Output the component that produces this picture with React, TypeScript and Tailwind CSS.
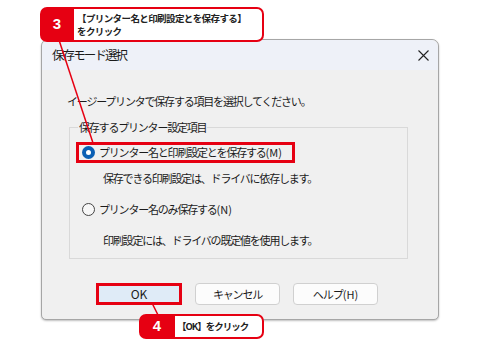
import React from "react";

const jp = { fontFamily: '"Noto Sans CJK JP", "Noto Sans", sans-serif' };

export default function App() {
  return (
    <div
      className="relative w-[480px] h-[360px] bg-white overflow-hidden text-[#1b1b1b]"
      style={jp}
    >
      {/* Dialog */}
      <div className="absolute left-[41px] top-[39px] w-[398px] h-[281px] border border-[#a6a6a6] rounded-t-[7px] rounded-b-[5px] bg-[#f0f0f0] flex flex-col shadow-[0_1px_2px_rgba(0,0,0,0.25)]">
        <div className="h-[30px] flex items-center justify-between pl-[10px] pr-[9px] bg-[#eef1f8] rounded-t-[7px]">
          <span className="text-[12.5px] leading-none tracking-[-1.9px]">保存モード選択</span>
          <svg width="11" height="11" viewBox="0 0 11 11">
            <path d="M0.5 0.5 L10.5 10.5 M10.5 0.5 L0.5 10.5" stroke="#222" strokeWidth="1.1" />
          </svg>
        </div>
        <div className="flex-1 flex flex-col pl-[25px] pt-[23px] text-[11px] tracking-[-1.2px]">
          <div className="leading-[16px]">
            イージープリンタで保存する項目を選択してください。
          </div>
          <div className="relative mt-[18px] ml-[2px] w-[339px] h-[132px] border border-[#d9d9d9]">
            <span className="absolute left-[8px] top-[-9px] bg-[#f0f0f0] px-[1px] leading-[16px]">
              保存するプリンター設定項目
            </span>
            <div className="flex flex-col pl-[12px] pt-[17px]">
              <div className="flex items-center gap-[4px] h-[15px]">
                <span className="w-[13px] h-[13px] rounded-full bg-[#0a5fb4] flex items-center justify-center">
                  <span className="w-[5px] h-[5px] rounded-full bg-white" />
                </span>
                <span className="leading-none">
                  プリンター名と印刷設定とを保存する<span className="tracking-normal">(M)</span>
                </span>
              </div>
              <div className="mt-[10px] pl-[21px] leading-[16px]">
                保存できる印刷設定は、ドライバに依存します。
              </div>
              <div className="mt-[16px] flex items-center gap-[4px] h-[15px]">
                <span className="w-[13px] h-[13px] rounded-full border border-[#444] bg-[#f7f7f7]" />
                <span className="leading-none">
                  プリンター名のみ保存する<span className="tracking-normal">(N)</span>
                </span>
              </div>
              <div className="mt-[15px] pl-[21px] leading-[16px]">
                印刷設定には、ドライバの既定値を使用します。
              </div>
            </div>
          </div>
          <div className="flex gap-[13px] mt-[24px] ml-[29px] tracking-normal">
            <div className="w-[86px] h-[22px] border-[3px] border-[#e60012] bg-[#dfebf7] flex items-center justify-center text-[12px]">
              OK
            </div>
            <div className="w-[85px] h-[22px] border border-[#d0d0d0] rounded-[4px] bg-[#fcfcfc] flex items-center justify-center tracking-[-1.2px]">
              キャンセル
            </div>
            <div className="w-[85px] h-[22px] border border-[#d0d0d0] rounded-[4px] bg-[#fcfcfc] flex items-center justify-center tracking-[-1px]">
              ヘルプ<span className="tracking-normal">(H)</span>
            </div>
          </div>
        </div>
      </div>

      {/* highlight around option 1 */}
      <div className="absolute left-[76px] top-[142px] w-[219px] h-[21px] border-[3px] border-[#e60012]" />

      {/* connector lines */}
      <svg className="absolute left-0 top-0 pointer-events-none" width="480" height="360">
        <line x1="59" y1="40" x2="93" y2="143" stroke="#e60012" strokeWidth="1.5" />
        <line x1="152" y1="303" x2="158" y2="315" stroke="#e60012" strokeWidth="1.5" />
      </svg>

      {/* Callout 3 */}
      <div className="absolute left-[40px] top-[7px] w-[224px] h-[35px] rounded-[7px] bg-[#e60012] flex p-[2px] pl-0">
        <div className="w-[34px] flex items-center justify-center text-white font-bold text-[15px]" style={{ fontFamily: '"Liberation Sans", sans-serif' }}>
          3
        </div>
        <div className="flex-1 bg-white rounded-r-[5px] flex flex-col justify-center pl-[3px] text-[9.5px] leading-[13px] font-bold tracking-[-0.6px] text-[#222]">
          <span>【プリンター名と印刷設定とを保存する】</span>
          <span>をクリック</span>
        </div>
      </div>

      {/* Callout 4 */}
      <div className="absolute left-[139px] top-[314px] w-[125px] h-[25px] rounded-[7px] bg-[#e60012] flex p-[2px] pl-0">
        <div className="w-[36px] flex items-center justify-center text-white font-bold text-[15px]" style={{ fontFamily: '"Liberation Sans", sans-serif' }}>
          4
        </div>
        <div className="flex-1 bg-white rounded-r-[5px] flex items-center pl-[2px] text-[9.5px] font-bold tracking-[-1px] text-[#222]">
          【OK】をクリック
        </div>
      </div>
    </div>
  );
}
